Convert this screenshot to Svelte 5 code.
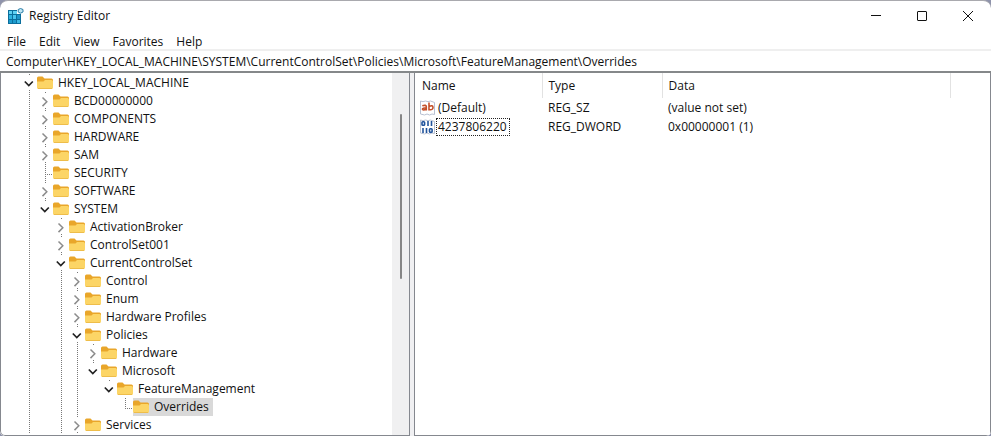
<script lang="ts">
	interface TreeKey {
		name: string;
		// one entry per ancestor level, true where that ancestor has more siblings below
		lines: boolean[];
		state: 'open' | 'closed' | 'leaf';
		last?: boolean;
		selected?: boolean;
	}

	const menus = ['File', 'Edit', 'View', 'Favorites', 'Help'];

	let address = $state(
		'Computer\\HKEY_LOCAL_MACHINE\\SYSTEM\\CurrentControlSet\\Policies\\Microsoft\\FeatureManagement\\Overrides'
	);

	const hive = [true];
	const system = [true, false];
	const controlSet = [true, false, true];
	const policies = [true, false, true, true];

	const keys: TreeKey[] = [
		{ name: 'HKEY_LOCAL_MACHINE', lines: [], state: 'open' },
		{ name: 'BCD00000000', lines: hive, state: 'closed' },
		{ name: 'COMPONENTS', lines: hive, state: 'closed' },
		{ name: 'HARDWARE', lines: hive, state: 'closed' },
		{ name: 'SAM', lines: hive, state: 'closed' },
		{ name: 'SECURITY', lines: hive, state: 'leaf' },
		{ name: 'SOFTWARE', lines: hive, state: 'closed' },
		{ name: 'SYSTEM', lines: hive, state: 'open', last: true },
		{ name: 'ActivationBroker', lines: system, state: 'closed' },
		{ name: 'ControlSet001', lines: system, state: 'closed' },
		{ name: 'CurrentControlSet', lines: system, state: 'open' },
		{ name: 'Control', lines: controlSet, state: 'closed' },
		{ name: 'Enum', lines: controlSet, state: 'closed' },
		{ name: 'Hardware Profiles', lines: controlSet, state: 'closed' },
		{ name: 'Policies', lines: controlSet, state: 'open' },
		{ name: 'Hardware', lines: policies, state: 'closed' },
		{ name: 'Microsoft', lines: policies, state: 'open', last: true },
		{ name: 'FeatureManagement', lines: [...policies, false], state: 'open', last: true },
		{ name: 'Overrides', lines: [...policies, false, false], state: 'leaf', last: true, selected: true },
		{ name: 'Services', lines: controlSet, state: 'closed' },
	];

	const values = [
		{ name: '(Default)', type: 'REG_SZ', data: '(value not set)', focused: false },
		{ name: '4237806220', type: 'REG_DWORD', data: '0x00000001 (1)', focused: true },
	];
</script>

<div class="window">
	<header class="titlebar">
		<svg class="logo" viewBox="0 0 16 16" aria-hidden="true">
			<path d="M0 2h9v4h4v10H0z" fill="#0b6e9c" />
			<path d="M1 3h3v3H1zM5 3h4v3H5z" fill="#5fd0f2" />
			<path d="M1 7h3v4H1z" fill="#2fb4e0" />
			<path d="M5 7h3v4H5z" fill="#49c5ee" />
			<path d="M9 7h3v4H9z" fill="#1f93c6" />
			<path d="M1 12h3v3H1zM5 12h3v3H5z" fill="#1c9bcd" />
			<path d="M9 12h3v3H9z" fill="#3db9e4" />
			<path d="M12.500 .5l2.500 1v2.500l-2.500 1.200-2.300-1.200V1.500z" fill="#bfe6f5" stroke="#2c7ea6" />
		</svg>
		<h1>Registry Editor</h1>
		<div class="controls">
			<button aria-label="Minimize">
				<svg viewBox="0 0 10 10"><path d="M0 4.500h10" /></svg>
			</button>
			<button aria-label="Maximize">
				<svg viewBox="0 0 10 10"><rect x=".5" y=".5" width="9" height="9" rx=".5" /></svg>
			</button>
			<button aria-label="Close">
				<svg viewBox="0 0 10 10"><path d="M0 0l10 10M10 0L0 10" /></svg>
			</button>
		</div>
	</header>

	<nav class="menu">
		{#each menus as menu}
			<button>{menu}</button>
		{/each}
	</nav>

	<input class="address" type="text" aria-label="Address" spellcheck="false" bind:value={address} />

	<main class="panes">
		<section class="tree-pane">
			<ul class="tree">
				{#each keys as key}
					<li>
						{#each key.lines as line}
							<span class="guide" class:line></span>
						{/each}
						<span class="guide line" class:last={key.last} class:leaf={key.state === 'leaf'}>
							{#if key.state === 'open'}
								<button class="toggle open" aria-label="Collapse {key.name}">
									<svg viewBox="0 0 10 10"><path d="M.8 3.500l4 4 4-4" stroke-width="1.700" /></svg>
								</button>
							{:else if key.state === 'closed'}
								<button class="toggle" aria-label="Expand {key.name}">
									<svg viewBox="0 0 10 10"><path d="M2.500 1.500l4.300 4.300-4.300 4.300" stroke-width="1.500" /></svg>
								</button>
							{/if}
						</span>
						<button class="key" class:selected={key.selected}>
							<svg class="folder" viewBox="0 0 16 14" aria-hidden="true">
								<path d="M0 2q0-1.500 1.500-1.500h4l2 2H14.500Q16 2.500 16 4v4H0z" fill="#e9a62a" />
								<path d="M0 5.500h6.500l1.500-1.500h6.500Q16 4 16 5.500V11.500q0 1.500-1.500 1.500h-13Q0 13 0 11.500z" fill="#fcd566" />
								<path d="M1 12.500h14" stroke="#eebd4a" />
							</svg>
							<span>{key.name}</span>
						</button>
					</li>
				{/each}
			</ul>
			<div class="scrollbar"><div class="thumb"></div></div>
		</section>

		<section class="value-pane">
			<table>
				<thead>
					<tr>
						<th class="name">Name</th>
						<th class="type">Type</th>
						<th class="data">Data</th>
						<th class="rest" aria-label="Empty"></th>
					</tr>
				</thead>
				<tbody>
					{#each values as value}
						<tr>
							<td>
								<div class="value">
									<svg viewBox="0 0 16 16" aria-hidden="true">
										<path d="M.5 1l2.500.7L5.500 1 8 1.700 10.500 1l4 1.500v12L12 14l-2.500 1L7 14l-2.500 1-4-1z" fill="#fff" stroke="#b9c1d2" />
										{#if value.type === 'REG_SZ'}
											<g fill="none" stroke="#c4502b" stroke-width="1.600">
												<path d="M2.300 5.800q4-1.300 4 1V10.500M6.300 7.800Q2.300 7.800 2.400 9.200q.4 1.800 3.900-.2" />
												<path d="M9 2.500v8M9 6.500q4-1.800 4 1t-4 2" />
											</g>
										{:else}
											<g fill="none" stroke="#20539c" stroke-width="1.600">
												<rect x="2" y="2.800" width="2.600" height="3.400" rx=".8" />
												<path d="M8 2v5M11.500 2v5M3 9v5M6.500 9v5" />
												<rect x="9.500" y="9.800" width="2.600" height="3.400" rx=".8" />
											</g>
										{/if}
									</svg>
									<span class:focused={value.focused}>{value.name}</span>
								</div>
							</td>
							<td>{value.type}</td>
							<td>{value.data}</td>
							<td></td>
						</tr>
					{/each}
				</tbody>
			</table>
		</section>
	</main>
</div>

<style>
	:global(body) {
		background: #8f93ab;
	}
	.window {
		display: flex;
		flex-direction: column;
		min-height: 100vh;
		box-sizing: border-box;
		border-top: 1px solid #a9a9ae;
		border-radius: 8px 8px 5px 5px;
		overflow: hidden;
		background: #fff;
		color: #111;
		font-family: 'Open Sans', 'Noto Sans', sans-serif;
		font-size: 12px;
		line-height: 18px;
	}
	button {
		border: 0;
		padding: 0;
		background: none;
		color: inherit;
		font: inherit;
	}
	.titlebar {
		display: flex;
		align-items: center;
		height: 30px;
		padding-left: 8px;
	}
	.logo {
		width: 16px;
		height: 16px;
	}
	h1 {
		flex: 1;
		margin: 0 0 0 5px;
		font-size: 12px;
		font-weight: 400;
	}
	.controls {
		display: flex;
	}
	.controls button {
		display: flex;
		align-items: center;
		justify-content: center;
		width: 46px;
		height: 30px;
	}
	.controls svg {
		width: 10px;
		height: 10px;
		fill: none;
		stroke: #111;
		overflow: visible;
	}
	.menu {
		display: flex;
		gap: 13px;
		height: 18px;
		padding: 0 7px;
	}
	.menu button {
		padding-top: 2px;
	}
	.address {
		box-sizing: border-box;
		width: 100%;
		height: 24px;
		margin: 0;
		padding: 0 6px;
		border: 0;
		border-top: 2px solid #efefef;
		border-bottom: 2px solid #85888a;
		outline: 0;
		background: #fff;
		color: inherit;
		font: inherit;
	}
	.panes {
		display: grid;
		grid-template-columns: 410px minmax(0, 1fr);
		column-gap: 4px;
		flex: 1;
		background: #f0f0f2;
	}
	.tree-pane,
	.value-pane {
		border: 1px solid #85888f;
		border-top: 0;
		background: #fff;
	}
	.tree-pane {
		display: flex;
		border-bottom-left-radius: 5px;
	}
	.tree {
		flex: 1;
		margin: 0;
		padding: 1px 0 0 20px;
		list-style: none;
	}
	.tree li {
		display: flex;
		height: 18px;
	}
	.guide {
		display: flex;
		align-items: center;
		justify-content: center;
		width: 15px;
		padding-right: 1px;
		background-repeat: no-repeat;
	}
	.line {
		background-image: repeating-linear-gradient(#777 0 1px, transparent 1px 2px);
		background-position: 8px 0;
		background-size: 1px 100%;
	}
	.line.last {
		background-size: 1px 9px;
	}
	.line.leaf {
		background-image: repeating-linear-gradient(#777 0 1px, transparent 1px 2px),
			repeating-linear-gradient(90deg, #777 0 1px, transparent 1px 2px);
		background-position: 8px 0, 8px 10px;
		background-size: 1px 100%, 8px 1px;
	}
	.line.last.leaf {
		background-size: 1px 11px, 8px 1px;
	}
	.toggle {
		display: flex;
		align-items: center;
		justify-content: center;
		width: 14px;
		height: 14px;
		background: #fff;
	}
	.toggle svg {
		width: 10px;
		height: 10px;
		fill: none;
		stroke: #8c8c8c;
		overflow: visible;
	}
	.toggle.open svg {
		stroke: #222;
	}
	.key {
		display: flex;
		align-items: center;
		gap: 5px;
		padding-right: 4px;
		white-space: nowrap;
	}
	.key.selected {
		background: #d9d9d9;
	}
	.folder {
		width: 16px;
		height: 14px;
	}
	.scrollbar {
		display: grid;
		grid-template-rows: 41fr 164fr 156fr;
		justify-content: center;
		width: 17px;
		background: #f0f0f1;
	}
	.thumb {
		grid-row: 2;
		width: 2px;
		border-radius: 1px;
		background: #868686;
	}
	table {
		width: 100%;
		table-layout: fixed;
		border-collapse: collapse;
	}
	th {
		box-sizing: border-box;
		height: 25px;
		padding: 0 6px;
		border-right: 1px solid #e2e2e2;
		font-weight: 400;
		text-align: left;
	}
	.name {
		width: 127px;
		padding-left: 7px;
	}
	.type {
		width: 120px;
	}
	.data {
		width: 288px;
	}
	.rest {
		border-right: 0;
	}
	td {
		height: 19px;
		padding: 0 6px;
	}
	td:first-child {
		padding-left: 5px;
	}
	.value {
		display: flex;
		align-items: center;
	}
	.value svg {
		width: 16px;
		height: 16px;
	}
	.value span {
		box-sizing: border-box;
		padding: 0 2px 0 1px;
		border: 1px solid transparent;
		line-height: 16px;
	}
	.value .focused {
		border: 1px dotted #222;
	}
</style>
